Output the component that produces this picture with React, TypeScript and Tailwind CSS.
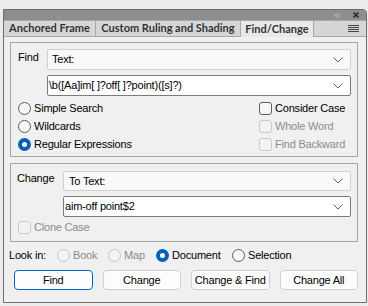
import React from "react";

const F = { fontFamily: '"Liberation Sans", Arial, sans-serif' };
const T = "text-[11px] tracking-[-0.2px] leading-none whitespace-nowrap";

function Chevron() {
  return (
    <svg width="10" height="6" viewBox="0 0 10 6" className="shrink-0">
      <path d="M0.5 0.5 L5 5 L9.5 0.5" fill="none" stroke="#606060" strokeWidth="1" />
    </svg>
  );
}

function Dropdown({ text, light, h, pl }: { text: string; light?: boolean; h: string; pl: string }) {
  return (
    <div
      className={`flex items-center justify-between pr-[7px] rounded-[2px] border ${h} ${pl} ${
        light ? "border-[#d0d0d0] bg-[#f9f9f9]" : "border-[#7a7a7a] bg-white"
      }`}
    >
      <span className={`${T} text-black`}>{text}</span>
      <Chevron />
    </div>
  );
}

function Radio({ checked, disabled }: { checked?: boolean; disabled?: boolean }) {
  if (checked)
    return (
      <span className="w-[13px] h-[13px] rounded-full bg-[#005fb8] flex items-center justify-center shrink-0">
        <span className="w-[5px] h-[5px] rounded-full bg-white" />
      </span>
    );
  return (
    <span
      className={`w-[13px] h-[13px] rounded-full border shrink-0 ${
        disabled ? "border-[#c4c4c4] bg-[#f3f3f3]" : "border-[#5c5c5c] bg-[#f7f7f7]"
      }`}
    />
  );
}

function Check({ disabled }: { disabled?: boolean }) {
  return (
    <span
      className={`w-[13px] h-[13px] rounded-[3px] border shrink-0 ${
        disabled ? "border-[#cacaca] bg-[#f3f3f3]" : "border-[#5c5c5c] bg-[#f7f7f7]"
      }`}
    />
  );
}

function RadioRow({ label, checked, disabled }: { label: string; checked?: boolean; disabled?: boolean }) {
  return (
    <div className="flex items-center h-[18px] gap-[3px]">
      <Radio checked={checked} disabled={disabled} />
      <span className={`${T} ${disabled ? "text-[#8c8c8c]" : "text-black"}`}>{label}</span>
    </div>
  );
}

function CheckRow({ label, disabled }: { label: string; disabled?: boolean }) {
  return (
    <div className="flex items-center h-[18px] gap-[3px]">
      <Check disabled={disabled} />
      <span className={`${T} ${disabled ? "text-[#8c8c8c]" : "text-black"}`}>{label}</span>
    </div>
  );
}

function Btn({ label, primary }: { label: string; primary?: boolean }) {
  return (
    <div
      className={`h-[20px] rounded-[4px] border flex items-center justify-center ${T} text-black bg-[#fdfdfd] ${
        primary ? "border-[#0067c0]" : "border-[#d0d0d0]"
      }`}
    >
      {label}
    </div>
  );
}

export default function App() {
  return (
    <div className="w-[368px] h-[306px] bg-[#ececec] pt-[9px] pl-[3px] overflow-hidden" style={F}>
      <div className="w-[364px] h-[294px] border border-[#6e6e6e] rounded-tr-[4px] bg-[#f0f0f0] flex flex-col overflow-hidden">
        {/* title bar */}
        <div className="h-[10px] bg-[#8e8e8e] flex items-center justify-end pr-[7px] gap-[12px] shrink-0">
          <svg width="7" height="5" viewBox="0 0 7 5">
            <path d="M3 0.5 L1 2.5 L3 4.5 M6 0.5 L4 2.5 L6 4.5" fill="none" stroke="#d0d0d0" strokeWidth="1" />
          </svg>
          <svg width="6" height="6" viewBox="0 0 6 6">
            <path d="M0.5 0.5 L5.5 5.5 M5.5 0.5 L0.5 5.5" fill="none" stroke="#2e2e2e" strokeWidth="1.6" />
          </svg>
        </div>
        {/* tabs */}
        <div
          className="h-[17px] bg-[#d6d6d6] border-t border-b border-[#a9a9a9] flex items-stretch shrink-0 text-[11px] font-bold text-[#333] whitespace-nowrap"
          style={{ fontFamily: 'Lato, "Liberation Sans", sans-serif' }}
        >
          <div className="w-[92px] flex items-center justify-center border-r border-[#a9a9a9]">Anchored Frame</div>
          <div className="w-[145px] flex items-center justify-center border-r border-[#a9a9a9]">Custom Ruling and Shading</div>
          <div className="w-[73px] flex items-center justify-center border-r border-[#a9a9a9] bg-[#e8e8e8] -mb-px">Find/Change</div>
          <div className="flex-1 flex items-center justify-end pr-[7px]">
            <svg width="11" height="8" viewBox="0 0 11 8">
              <path d="M0 0.5 H11 M0 2.5 H11 M0 4.5 H11 M0 6.5 H11" stroke="#444" strokeWidth="1" />
            </svg>
          </div>
        </div>
        {/* content */}
        <div className="flex-1 pl-[6px] pr-[8px] pt-[5px] flex flex-col">
          {/* Find box */}
          <div className="h-[115px] border border-[#a6a6a6] pl-[7px] pr-[6px] pt-[6px] flex flex-col">
            <div className="flex items-start">
              <span className={`w-[29px] ${T} pt-[3px] text-black`}>Find</span>
              <div className="flex-1">
                <Dropdown text="Text:" light h="h-[21px]" pl="pl-[4px]" />
              </div>
            </div>
            <div className="pl-[29px] mt-[5px]">
              <Dropdown text="\b([Aa]im[ ]?off[ ]?point)([s]?)" h="h-[21px]" pl="pl-[1px]" />
            </div>
            <div className="flex mt-[3px]">
              <div className="flex-1 flex flex-col">
                <RadioRow label="Simple Search" />
                <RadioRow label="Wildcards" />
                <RadioRow label="Regular Expressions" checked />
              </div>
              <div className="w-[92px] flex flex-col">
                <CheckRow label="Consider Case" />
                <CheckRow label="Whole Word" disabled />
                <CheckRow label="Find Backward" disabled />
              </div>
            </div>
          </div>
          {/* Change box */}
          <div className="mt-[6px] h-[79px] border border-[#a6a6a6] pl-[6px] pr-[6px] pt-[7px] flex flex-col">
            <div className="flex items-start">
              <span className={`w-[46px] ${T} pt-[2px] text-black`}>Change</span>
              <div className="flex-1">
                <Dropdown text="To Text:" light h="h-[20px]" pl="pl-[5px]" />
              </div>
            </div>
            <div className="pl-[46px] mt-[5px]">
              <Dropdown text="aim-off point$2" h="h-[21px]" pl="pl-[1px]" />
            </div>
            <div className="mt-[1px] pl-[1px]">
              <CheckRow label="Clone Case" disabled />
            </div>
          </div>
          {/* Look in */}
          <div className="flex items-center h-[18px] mt-[4px] -ml-[1px]">
            <span className={`${T} text-black w-[48px]`}>Look in:</span>
            <div className="w-[51px]"><RadioRow label="Book" disabled /></div>
            <div className="w-[48px]"><RadioRow label="Map" disabled /></div>
            <div className="w-[76px]"><RadioRow label="Document" checked /></div>
            <RadioRow label="Selection" />
          </div>
          {/* buttons */}
          <div className="grid grid-cols-4 gap-[10px] mt-[6px] pl-[4px]">
            <Btn label="Find" primary />
            <Btn label="Change" />
            <Btn label="Change & Find" />
            <Btn label="Change All" />
          </div>
        </div>
      </div>
    </div>
  );
}
